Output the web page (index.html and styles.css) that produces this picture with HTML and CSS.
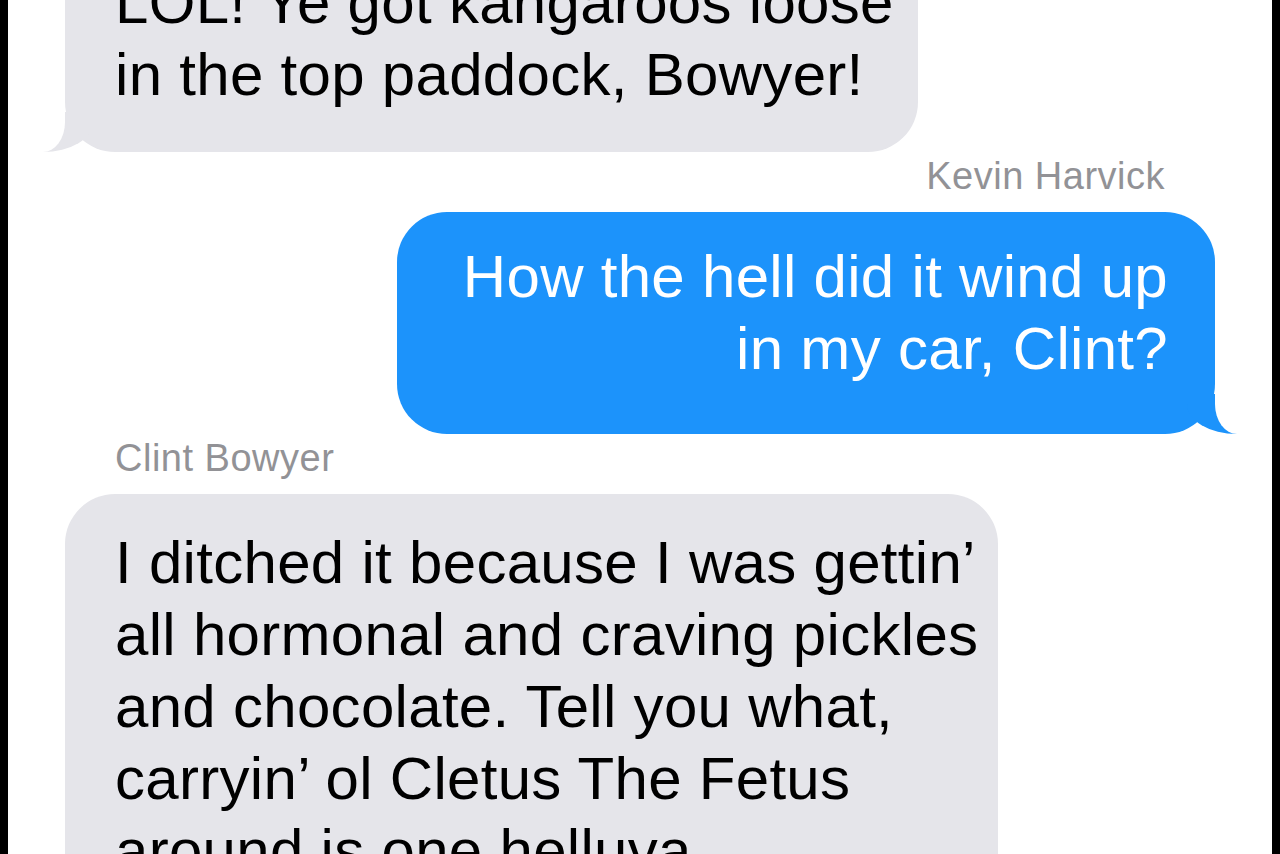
FILE: index.html
```html
<!DOCTYPE html>
<html lang="en">
<head>
    <meta charset="UTF-8">
    <meta name="viewport" content="width=device-width, initial-scale=1.0">
    <title>Messages</title>
    <link rel="stylesheet" href="styles.css">
</head>
<body>
<div class="screen">
    <div class="thread">
        <div class="bubble them first">
            LOL! Ye got kangaroos loose<br>
            in the top paddock, Bowyer!
        </div>

        <div class="sender right">Kevin Harvick</div>
        <div class="bubble me">
            How the hell did it wind up<br>
            in my car, Clint?
        </div>

        <div class="sender">Clint Bowyer</div>
        <div class="bubble them long">
            I ditched it because I was gettin’<br>
            all hormonal and craving pickles<br>
            and chocolate. Tell you what,<br>
            carryin’ ol Cletus The Fetus<br>
            around is one helluva
        </div>
    </div>
</div>
</body>
</html>
```

FILE: styles.css
```css
body {
    margin: 0;
    background: #000;
    font-family: "Liberation Sans", Arial, sans-serif;
}
.screen {
    margin: 0 8px;
    height: 854px;
    background: #fff;
    overflow: hidden;
}
.thread {
    display: flex;
    flex-direction: column;
    padding: 0 57px;
}
.bubble {
    position: relative;
    box-sizing: border-box;
    font-size: 60px;
    letter-spacing: 0.3px;
    line-height: 72px;
    white-space: nowrap;
    padding: 29px 0 49px 50px;
    border-radius: 50px;
}
.them {
    align-self: flex-start;
    background: #e5e5ea;
    color: #000;
}
.them::before {
    content: "";
    position: absolute;
    bottom: 0;
    left: -22px;
    width: 50px;
    height: 40px;
    background: #e5e5ea;
    border-bottom-right-radius: 50px 30px;
}
.them::after {
    content: "";
    position: absolute;
    bottom: 0;
    left: -45px;
    width: 45px;
    height: 42px;
    background: #fff;
    border-bottom-right-radius: 22px 30px;
}
.me {
    align-self: flex-end;
    width: 818px;
    text-align: right;
    padding-left: 0;
    padding-right: 47px;
    background: #1c93fb;
    color: #fff;
}
.me::before {
    content: "";
    position: absolute;
    bottom: 0;
    right: -22px;
    width: 50px;
    height: 40px;
    background: #1c93fb;
    border-bottom-left-radius: 50px 30px;
}
.me::after {
    content: "";
    position: absolute;
    bottom: 0;
    right: -45px;
    width: 45px;
    height: 42px;
    background: #fff;
    border-bottom-left-radius: 22px 30px;
}
.first {
    width: 853px;
    margin-top: -62px;
    padding-bottom: 41px;
}
.long {
    width: 933px;
    padding-top: 33px;
    padding-bottom: 80px;
}
.sender {
    font-size: 38px;
    letter-spacing: 0.5px;
    line-height: 44px;
    color: #929296;
    margin: 2px 0 14px;
    padding-left: 50px;
}
.sender.right {
    text-align: right;
    padding-left: 0;
    padding-right: 50px;
}
```
